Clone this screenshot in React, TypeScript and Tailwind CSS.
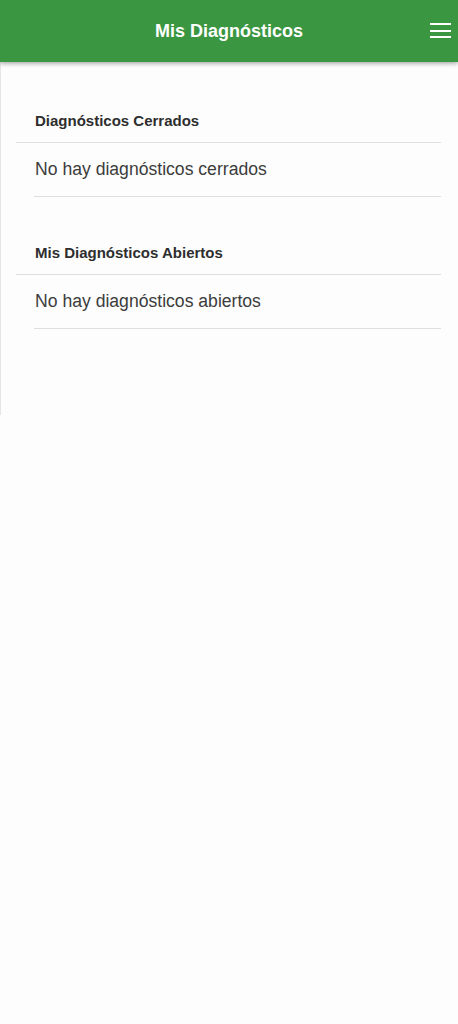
import React from "react";

const font = { fontFamily: '"Liberation Sans", Arial, sans-serif' };

function Section({ title, empty, first }: { title: string; empty: string; first?: boolean }) {
  return (
    <div className={first ? "pt-[49px]" : "pt-[46px]"}>
      <div className="ml-[15px] mr-[17px] pl-[19px] pb-[11px] border-b border-[#dedede] text-[15px] leading-[20px] font-bold text-[#2e2e2e]">
        {title}
      </div>
      <div className="ml-[33px] mr-[17px] pl-[1px] py-[14px] border-b border-[#dedede] text-[17.6px] leading-[25px] text-[#3c3c3c]">
        {empty}
      </div>
    </div>
  );
}

export default function App() {
  return (
    <div className="w-[458px] h-[1024px] bg-[#fdfdfd] overflow-hidden" style={font}>
      <header className="relative z-10 h-[62px] bg-[#3b9642] flex items-center justify-center shadow-[0_2px_4px_rgba(0,0,0,0.3)]">
        <h1 className="text-white text-[18px] font-bold leading-none">Mis Diagnósticos</h1>
        <button className="absolute right-[7px] top-[23px] w-[21px] h-[15px] flex flex-col justify-between">
          <span className="block h-[2px] w-full bg-white" />
          <span className="block h-[2px] w-full bg-white" />
          <span className="block h-[2px] w-full bg-white" />
        </button>
      </header>
      <main className="h-[353px] border-l border-[#e6e6e6]">
        <Section first title="Diagnósticos Cerrados" empty="No hay diagnósticos cerrados" />
        <Section title="Mis Diagnósticos Abiertos" empty="No hay diagnósticos abiertos" />
      </main>
    </div>
  );
}
